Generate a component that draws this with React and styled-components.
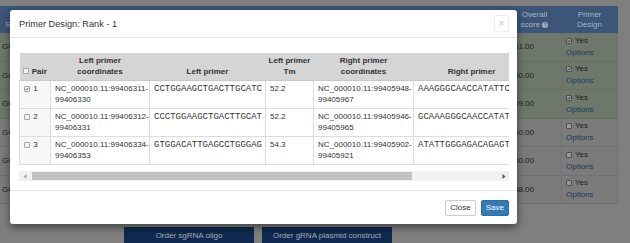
import React from "react";
import styled, { createGlobalStyle } from "styled-components";

const GlobalStyle = createGlobalStyle`
  html, body { margin: 0; padding: 0; }
  body {
    width: 630px;
    height: 243px;
    overflow: hidden;
    background: #7f7f7f;
    font-family: "Liberation Sans", Arial, sans-serif;
    font-size: 8px;
    color: #1c1c1c;
  }
`;

const pairs = [
  {
    id: 1,
    checked: true,
    left: ["NC_000010.11:99406311-", "99406330"],
    leftSeq: "CCTGGAAGCTGACTTGCATC",
    tm: "52.2",
    right: ["NC_000010.11:99405948-", "99405967"],
    rightSeq: "AAAGGGCAACCATATTCTGA",
  },
  {
    id: 2,
    checked: false,
    left: ["NC_000010.11:99406312-", "99406331"],
    leftSeq: "CCCTGGAAGCTGACTTGCAT",
    tm: "52.2",
    right: ["NC_000010.11:99405946-", "99405965"],
    rightSeq: "GCAAAGGGCAACCATATTCT",
  },
  {
    id: 3,
    checked: false,
    left: ["NC_000010.11:99406334-", "99406353"],
    leftSeq: "GTGGACATTGAGCCTGGGAG",
    tm: "54.3",
    right: ["NC_000010.11:99405902-", "99405921"],
    rightSeq: "ATATTGGGAGACAGAGTGCT",
  },
];

const guides = [
  { seq: "GCCTGGAAGCTGACTTGCATCAGG", score: "61.00", picked: true },
  { seq: "GCAAGTCAGCTTCCAGGGCTTGG", score: "50.00", picked: true },
  { seq: "GCTCCCAGGCTCAATGTCCACGG", score: "49.00", picked: true },
  { seq: "GCATCAGGATTCCAGCTCTGAGG", score: "40.00", picked: false },
  { seq: "GCAGAGCTGGAATCCTGATGCAG", score: "40.00", picked: false },
  { seq: "GCTGGAATCCTGATGCAAGTCAG", score: "38.00", picked: false },
];

const Check = ({ checked, $dim }) => (
  <CheckBox $dim={$dim}>
    {checked && (
      <svg width="6" height="6" viewBox="0 0 6 6">
        <path d="M1 3.2 L2.4 4.6 L5 1.3" fill="none" stroke={$dim ? "#111" : "#333"} strokeWidth="1.2" />
      </svg>
    )}
  </CheckBox>
);

export default function App() {
  return (
    <>
      <GlobalStyle />
      <Page>
        <BgTable>
          <BgHead>
            <BgHeadCell $align="left">Sequence</BgHeadCell>
            <BgHeadCell>
              Overall
              <br />
              score <Help>?</Help>
            </BgHeadCell>
            <BgHeadCell>
              Primer
              <br />
              Design
            </BgHeadCell>
          </BgHead>
          {guides.map((g, i) => (
            <BgRow key={i} $success={g.picked}>
              <SeqCell>{g.seq}</SeqCell>
              <ScoreCell>{g.score}</ScoreCell>
              <DesignCell>
                <YesLine>
                  <Check checked={g.picked} $dim /> Yes
                </YesLine>
                <BgLink>Options</BgLink>
              </DesignCell>
            </BgRow>
          ))}
        </BgTable>
        <Actions>
          <OrderButton>Order sgRNA oligo</OrderButton>
          <OrderButton>Order gRNA plasmid construct</OrderButton>
        </Actions>

        <Modal>
          <ModalHeader>
            <Title>Primer Design: Rank - 1</Title>
            <CloseX>×</CloseX>
          </ModalHeader>
          <ModalBody>
            <TableWrap>
              <PrimerTable>
                <colgroup>
                  <col style={{ width: 31 }} />
                  <col style={{ width: 99 }} />
                  <col style={{ width: 116 }} />
                  <col style={{ width: 48 }} />
                  <col style={{ width: 100 }} />
                  <col style={{ width: 116 }} />
                  <col style={{ width: 48 }} />
                  <col style={{ width: 52 }} />
                </colgroup>
                <thead>
                  <tr>
                    <Th $align="left">
                      <Check /> Pair
                    </Th>
                    <Th>
                      Left primer
                      <br />
                      coordinates
                    </Th>
                    <Th>Left primer</Th>
                    <Th>
                      Left primer
                      <br />
                      Tm
                    </Th>
                    <Th>
                      Right primer
                      <br />
                      coordinates
                    </Th>
                    <Th>Right primer</Th>
                    <Th>
                      Right primer
                      <br />
                      Tm
                    </Th>
                    <Th>
                      Product
                      <br />
                      size
                    </Th>
                  </tr>
                </thead>
                <tbody>
                  {pairs.map((p) => (
                    <tr key={p.id}>
                      <PairCell>
                        <Check checked={p.checked} /> {p.id}
                      </PairCell>
                      <Td>
                        {p.left[0]}
                        <br />
                        {p.left[1]}
                      </Td>
                      <SeqTd>{p.leftSeq}</SeqTd>
                      <Td>{p.tm}</Td>
                      <Td>
                        {p.right[0]}
                        <br />
                        {p.right[1]}
                      </Td>
                      <SeqTd>{p.rightSeq}</SeqTd>
                      <Td>52.8</Td>
                      <Td>433</Td>
                    </tr>
                  ))}
                </tbody>
              </PrimerTable>
            </TableWrap>
            <ScrollTrack>
              <ScrollArrow>
                <svg width="4" height="5" viewBox="0 0 4 5">
                  <path d="M3.5 0 L0.5 2.5 L3.5 5 Z" fill="#a8a8a8" />
                </svg>
              </ScrollArrow>
              <ScrollThumb />
              <ScrollArrow $end>
                <svg width="4" height="5" viewBox="0 0 4 5">
                  <path d="M0.5 0 L3.5 2.5 L0.5 5 Z" fill="#505050" />
                </svg>
              </ScrollArrow>
            </ScrollTrack>
          </ModalBody>
          <ModalFooter>
            <FooterButton>Close</FooterButton>
            <FooterButton $primary>Save</FooterButton>
          </ModalFooter>
        </Modal>
      </Page>
    </>
  );
}

const Page = styled.div`
  position: relative;
  width: 630px;
  height: 243px;
  padding-top: 6px;
  box-sizing: border-box;
  overflow: hidden;
`;

const BgTable = styled.div`
  width: 618px;
`;

const BgHead = styled.div`
  display: grid;
  grid-template-columns: 508px 53px 57px;
  height: 27px;
  background: #3c5679;
  color: #a9b3c2;
  line-height: 10px;
`;

const BgHeadCell = styled.div`
  align-self: end;
  padding: 0 2px 3px ${({ $align }) => ($align === "left" ? "5px" : "2px")};
  text-align: ${({ $align }) => $align || "center"};
`;

const Help = styled.span`
  display: inline-block;
  width: 6px;
  height: 6px;
  border-radius: 50%;
  background: #a9b3c2;
  color: #3c5679;
  font-size: 5px;
  line-height: 6px;
  text-align: center;
  font-weight: bold;
  vertical-align: 0;
`;

const BgRow = styled.div`
  display: grid;
  grid-template-columns: 508px 53px 57px;
  height: 28.5px;
  box-sizing: border-box;
  background: ${({ $success }) => ($success ? "#6e786a" : "#7b7b7b")};
  border-bottom: 1px solid ${({ $success }) => ($success ? "#667062" : "#707070")};
  border-right: 1px solid #707070;
`;

const SeqCell = styled.div`
  display: flex;
  align-items: center;
  padding-left: 2px;
  font-size: 8px;
`;

const ScoreCell = styled.div`
  display: flex;
  align-items: center;
  padding-left: 6px;
`;

const DesignCell = styled.div`
  display: flex;
  flex-direction: column;
  justify-content: center;
  padding-left: 4px;
  border-left: 1px solid #707070;
  line-height: 12px;
`;

const YesLine = styled.div`
  display: flex;
  align-items: center;
  gap: 2px;
`;

const BgLink = styled.span`
  color: #1b3a5e;
`;

const CheckBox = styled.span`
  display: inline-flex;
  align-items: center;
  justify-content: center;
  width: 6px;
  height: 6px;
  box-sizing: border-box;
  border: 1px solid ${({ $dim }) => ($dim ? "#505050" : "#a5a5a5")};
  border-radius: 1px;
  background: ${({ $dim }) => ($dim ? "#9a9a9a" : "#f2f2f2")};
  vertical-align: -0.5px;
  margin-right: 1px;
`;

const Actions = styled.div`
  display: flex;
  gap: 8px;
  margin: 23px 0 0 124px;
`;

const OrderButton = styled.button`
  width: 130px;
  height: 18px;
  padding: 0;
  border: 0;
  background: #0f2a4e;
  color: #a3acbb;
  font-family: "Liberation Sans", Arial, sans-serif;
  font-size: 8px;
  line-height: 16px;
  text-align: center;
`;

const Modal = styled.div`
  position: absolute;
  left: 10px;
  top: 10px;
  width: 507px;
  height: 214px;
  display: flex;
  flex-direction: column;
  background: #fff;
  border-radius: 3px;
  box-shadow: 0 3px 9px rgba(0, 0, 0, 0.5);
  color: #333;
`;

const ModalHeader = styled.div`
  display: flex;
  align-items: center;
  justify-content: space-between;
  height: 28px;
  box-sizing: border-box;
  padding: 0 8px 0 9px;
  border-bottom: 1px solid #e5e5e5;
`;

const Title = styled.h4`
  margin: 0;
  font-size: 9.2px;
  font-weight: normal;
  color: #333;
`;

const CloseX = styled.button`
  width: 15px;
  height: 17px;
  padding: 0;
  border: 1px solid #eee;
  border-radius: 2px;
  background: #fff;
  color: #c6c6c6;
  font-family: "Liberation Sans", Arial, sans-serif;
  font-size: 10px;
  line-height: 14px;
`;

const ModalBody = styled.div`
  flex: 1;
  padding: 15px 8px 0 9px;
`;

const TableWrap = styled.div`
  width: 490px;
  overflow: hidden;
`;

const PrimerTable = styled.table`
  table-layout: fixed;
  width: 610px;
  border-collapse: collapse;
  font-size: 8px;
  line-height: 10.5px;
`;

const Th = styled.th`
  padding: 3px 3px;
  background: #d5d5d5;
  font-weight: bold;
  vertical-align: bottom;
  text-align: ${({ $align }) => $align || "center"};
  border-bottom: 1px solid #c8c8c8;
  white-space: nowrap;
  overflow: hidden;
`;

const Td = styled.td`
  padding: 3px 4px;
  vertical-align: top;
  border: 1px solid #ddd;
  white-space: nowrap;
  overflow: hidden;
`;

const PairCell = styled(Td)`
  background: #f7f7f7;
  padding-left: 4px;
`;

const SeqTd = styled(Td)`
  font-family: "Liberation Mono", "Courier New", monospace;
  font-size: 9px;
  color: #333;
`;

const ScrollTrack = styled.div`
  display: flex;
  align-items: center;
  width: 490px;
  height: 10px;
  margin-top: 6px;
  background: #f1f1f1;
`;

const ScrollArrow = styled.div`
  display: flex;
  align-items: center;
  justify-content: center;
  width: 11px;
  height: 10px;
  margin-left: ${({ $end }) => ($end ? "auto" : "0")};
`;

const ScrollThumb = styled.div`
  width: 380px;
  height: 8px;
  margin-left: 2px;
  background: #c1c1c1;
`;

const ModalFooter = styled.div`
  display: flex;
  justify-content: flex-end;
  gap: 5px;
  height: 34px;
  box-sizing: border-box;
  padding: 9px 8px 0;
  border-top: 1px solid #e5e5e5;
`;

const FooterButton = styled.button`
  height: 16px;
  padding: 0 4px;
  border: 1px solid ${({ $primary }) => ($primary ? "#2e6da4" : "#ccc")};
  border-radius: 2px;
  background: ${({ $primary }) => ($primary ? "#337ab7" : "#fff")};
  color: ${({ $primary }) => ($primary ? "#fff" : "#333")};
  font-family: "Liberation Sans", Arial, sans-serif;
  font-size: 8px;
  line-height: 14px;
`;
